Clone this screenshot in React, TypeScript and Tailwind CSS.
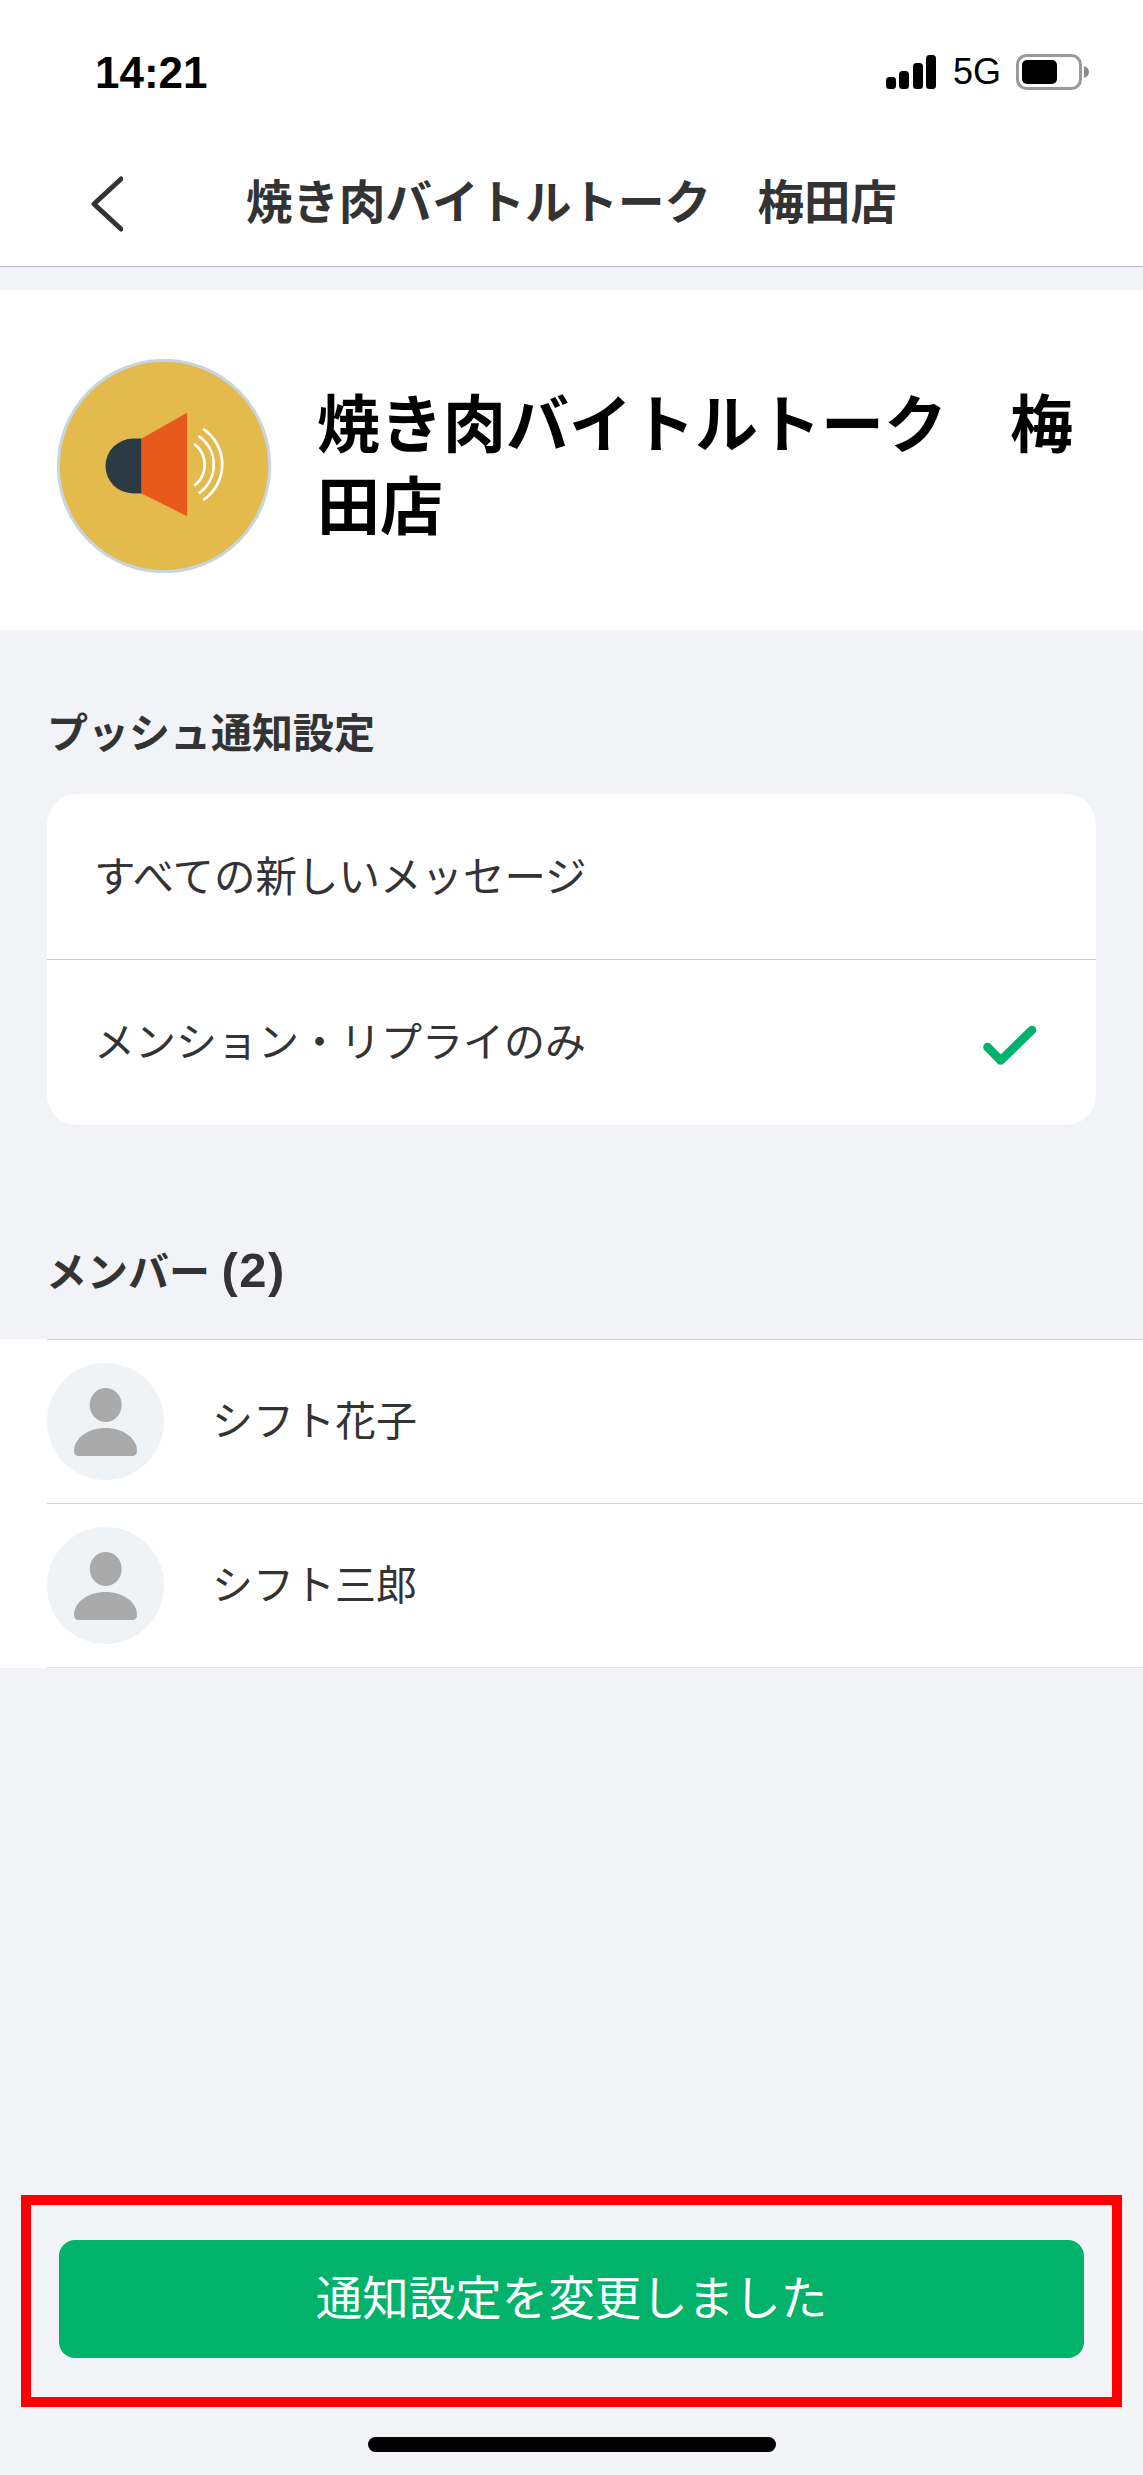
const members = ['シフト花子', 'シフト三郎'];

function SpeakerAvatar() {
  return (
    <svg viewBox="52 58 640 640" className="w-[214px] h-[214px] shrink-0">
      <circle cx="372" cy="378" r="316" fill="#e4ba4d" stroke="#c6d6e0" strokeWidth="9" />
      <path d="M305 296H280A83 82 0 0 0 280 460H305Z" fill="#2b3a43" />
      <path d="M305 296L441 219V528L305 460Z" fill="#e8591c" />
      <g fill="none" stroke="#fff" strokeWidth="8" strokeLinecap="round">
        <path d="M465 314A78 78 0 0 1 465 435" />
        <path d="M478 290A104 104 0 0 1 478 458" />
        <path d="M492 269A128 128 0 0 1 492 478" />
      </g>
    </svg>
  );
}

function PersonAvatar() {
  return (
    <div className="w-[117px] h-[117px] rounded-full bg-[#eff3f6] flex items-center justify-center shrink-0">
      <svg viewBox="0 0 117 117" className="w-[117px] h-[117px]">
        <ellipse cx="58.7" cy="42" rx="16" ry="17" fill="#aaaaaa" />
        <path d="M27 88C27 75 41 65 58.5 65C76 65 90 75 90 88C90 91 88 93 85 93H32C29 93 27 91 27 88Z" fill="#aaaaaa" />
      </svg>
    </div>
  );
}

export default function App() {
  return (
    <div className="relative w-[1143px] h-[2475px] bg-[#f1f3f7] flex flex-col overflow-hidden font-['Liberation_Sans','Noto_Sans_CJK_JP',sans-serif] text-[#333333]">
      {/* status bar */}
      <div className="bg-white h-[144px] shrink-0 flex items-center justify-between pl-[95px] pr-[54px]">
        <span className="pt-[2px] text-[44px] leading-none font-bold text-black">14:21</span>
        <div className="flex items-center">
          <svg viewBox="0 0 50 34" className="w-[50px] h-[34px]">
            <rect x="0" y="22" width="10" height="12" rx="3.5" fill="#000" />
            <rect x="13" y="16" width="10" height="18" rx="3.5" fill="#000" />
            <rect x="27" y="8" width="10" height="26" rx="3.5" fill="#000" />
            <rect x="40" y="0" width="10" height="34" rx="3.5" fill="#000" />
          </svg>
          <span className="ml-[17px] text-[36px] leading-none text-black">5G</span>
          <svg viewBox="0 0 73 36" className="ml-[15px] w-[73px] h-[36px]">
            <rect x="1.5" y="1.5" width="63" height="33" rx="9" fill="none" stroke="#9a9a9a" strokeWidth="3" />
            <rect x="6" y="6" width="35" height="24" rx="5" fill="#000" />
            <path d="M68 12C71 13 73 15 73 18C73 21 71 23 68 24Z" fill="#8a8a8a" />
          </svg>
        </div>
      </div>

      {/* nav */}
      <div className="bg-white h-[123px] pb-[3px] shrink-0 border-b border-[#b5b5bb] flex items-center">
        <svg viewBox="0 0 32 56" className="ml-[91px] w-[32px] h-[56px] shrink-0">
          <path d="M30 3L3 28L30 53" fill="none" stroke="#333333" strokeWidth="5" strokeLinecap="round" strokeLinejoin="round" />
        </svg>
        <h1 className="ml-[123px] text-[46.5px] leading-none font-bold whitespace-nowrap">焼き肉バイトルトーク　梅田店</h1>
      </div>

      {/* channel */}
      <div className="mt-[23px] pt-[12px] bg-white h-[340px] shrink-0 flex items-center pl-[57px]">
        <SpeakerAvatar />
        <h2 className="ml-[46px] w-[770px] text-[63px] leading-[82px] font-bold text-black">焼き肉バイトルトーク　梅田店</h2>
      </div>

      {/* push settings */}
      <div className="pt-[79px] px-[47px] shrink-0">
        <h3 className="text-[41px] leading-[50px] font-bold mb-[35px]">プッシュ通知設定</h3>
        <div className="bg-white rounded-[30px] w-[1049px]">
          <div className="h-[166px] pt-[3px] border-b border-[#c9c9ce] flex items-center pl-[47px] text-[41.5px]">
            すべての新しいメッセージ
          </div>
          <div className="h-[165px] pt-[2px] flex items-center justify-between pl-[47px] pr-[59px] text-[41px]">
            <span>メンション・リプライのみ</span>
            <svg viewBox="0 0 54 41" className="mt-[4px] w-[54px] h-[41px]">
              <path d="M4.5 22L17.7 35.5L49 5" fill="none" stroke="#00b26a" strokeWidth="8.7" strokeLinecap="round" strokeLinejoin="round" />
            </svg>
          </div>
        </div>
      </div>

      {/* members */}
      <h3 className="pt-[121px] pl-[46px] h-[171px] text-[41px] leading-[50px] font-bold mb-[43px] shrink-0">
        メンバー <span className="text-[49px] leading-none tracking-[1.5px]">(2)</span>
      </h3>
      <div className="bg-white shrink-0">
        {members.map((name) => (
          <div key={name} className="ml-[47px] h-[164px] border-t border-[#d2d2d6] flex items-center">
            <PersonAvatar />
            <span className="ml-[48px] pt-[2px] text-[41px]">{name}</span>
          </div>
        ))}
        <div className="ml-[47px] border-t border-[#dedee2]" />
      </div>

      <div className="flex-1" />

      {/* footer */}
      <div className="px-[59px] shrink-0">
        <button className="w-full h-[118px] pt-[2px] rounded-[16px] bg-[#00b26a] text-white text-[46.5px] flex items-center justify-center">
          通知設定を変更しました
        </button>
      </div>
      <div className="mt-[79px] mb-[23px] mx-auto w-[408px] h-[15px] rounded-full bg-black shrink-0" />

      {/* annotation */}
      <div className="absolute left-[21px] top-[2195px] w-[1101px] h-[212px] border-[10px] border-[#ff0000] pointer-events-none" />
    </div>
  );
}
